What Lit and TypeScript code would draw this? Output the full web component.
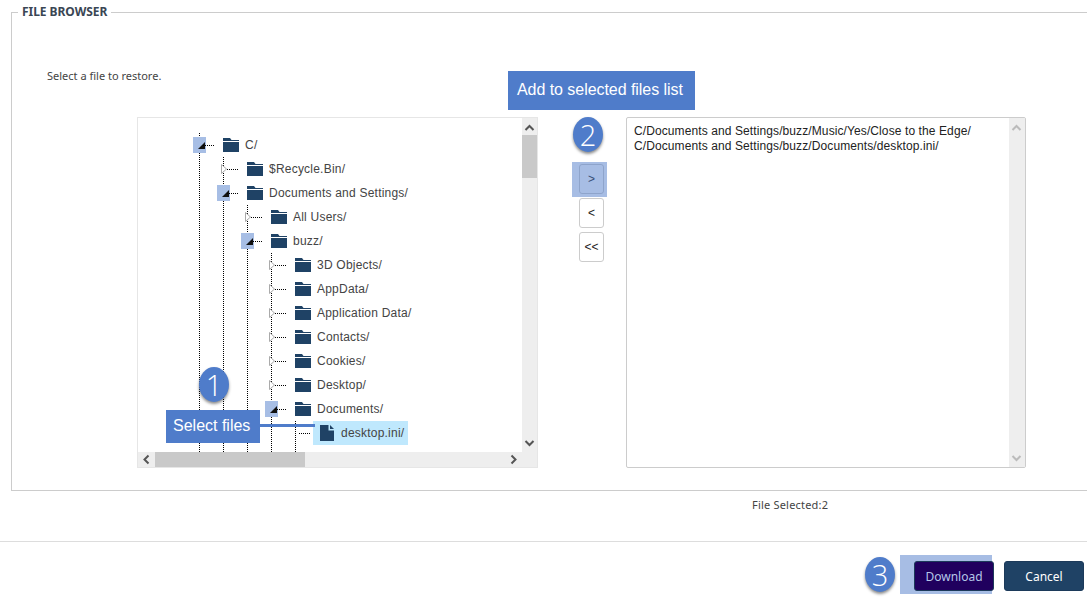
import { LitElement, html, css, svg } from "lit";
import { customElement } from "lit/decorators.js";

type Row = { name: string; depth: number; state: "open" | "closed" | "leaf"; selected?: boolean };

const rows: Row[] = [
  { name: "C/", depth: 0, state: "open" },
  { name: "$Recycle.Bin/", depth: 1, state: "closed" },
  { name: "Documents and Settings/", depth: 1, state: "open" },
  { name: "All Users/", depth: 2, state: "closed" },
  { name: "buzz/", depth: 2, state: "open" },
  { name: "3D Objects/", depth: 3, state: "closed" },
  { name: "AppData/", depth: 3, state: "closed" },
  { name: "Application Data/", depth: 3, state: "closed" },
  { name: "Contacts/", depth: 3, state: "closed" },
  { name: "Cookies/", depth: 3, state: "closed" },
  { name: "Desktop/", depth: 3, state: "closed" },
  { name: "Documents/", depth: 3, state: "open" },
  { name: "desktop.ini/", depth: 4, state: "leaf", selected: true },
];

const guides = [
  { depth: 0, top: 15 },
  { depth: 1, top: 39 },
  { depth: 2, top: 87 },
  { depth: 3, top: 135 },
  { depth: 4, top: 303 },
];

const chevron = (dir: "up" | "down" | "left" | "right", cls: string) => {
  const d = {
    up: "M1.5 7 L5.5 3 L9.5 7",
    down: "M1.5 4 L5.5 8 L9.5 4",
    left: "M7.5 1.5 L3.5 5.5 L7.5 9.5",
    right: "M3.5 1.5 L7.5 5.5 L3.5 9.5",
  }[dir];
  return html`<svg class="chev ${cls}" width="11" height="11" viewBox="0 0 11 11">${svg`<path d=${d} fill="none" stroke="currentColor" stroke-width="2"/>`}</svg>`;
};

const folder = html`<svg class="icon" width="16" height="14" viewBox="0 0 16 14"><path d="M0 0h7l1.5 2H16v1H0z" fill="#1f4265"/><path d="M0 4h16v10H0z" fill="#1f4265"/></svg>`;
const doc = html`<svg class="icon doc" width="14" height="16" viewBox="0 0 14 16"><path d="M0 0h8.5v5.5H14V16H0z" fill="#1f4265"/><path d="M10 0l4 4h-4z" fill="#1f4265"/></svg>`;

@customElement("app-root")
export class AppRoot extends LitElement {
  static styles = css`
    :host {
      display: block;
      position: relative;
      width: 1087px;
      height: 600px;
      overflow: hidden;
      background: #fff;
      font-family: "Liberation Sans", Arial, sans-serif;
      color: #444;
    }
    * { box-sizing: border-box; }
    .browser {
      margin: 0 0 0 11px;
      padding: 0;
      min-width: 0;
      height: 491px;
      border: 1px solid #ccc;
      border-right: none;
    }
    .browser legend {
      margin-left: 6px;
      padding: 0 4px;
      font: 700 12px/24px "Noto Sans", sans-serif;
      letter-spacing: -0.05px;
      color: #3a4654;
    }
    .intro {
      margin: 44px 0 0 35px;
      font: 11px/16px "Noto Sans", sans-serif;
      color: #444;
    }
    .columns {
      display: flex;
      align-items: flex-start;
      margin: 33px 0 0 125px;
    }
    .tree {
      display: grid;
      grid-template-columns: 384px 15px;
      grid-template-rows: 334px 15px;
      width: 401px;
      height: 351px;
      border: 1px solid #e6e6e6;
      flex: none;
    }
    .viewport {
      position: relative;
      overflow: hidden;
      padding-top: 15px;
    }
    .guide {
      position: absolute;
      bottom: 0;
      width: 1px;
      background: repeating-linear-gradient(to bottom, #000 0 1px, transparent 1px 2px);
    }
    .row {
      position: relative;
      display: flex;
      align-items: center;
      height: 24px;
      font-size: 12px;
      letter-spacing: 0.22px;
      white-space: nowrap;
    }
    .toggle {
      width: 13px;
      height: 16px;
      flex: none;
      display: block;
    }
    .toggle.open { background: #a7bee5; }
    .dots {
      width: 12px;
      height: 1px;
      margin: 1px 0 0 -3px;
      flex: none;
      background: repeating-linear-gradient(to right, #000 0 1px, transparent 1px 2px);
    }
    .label {
      display: flex;
      align-items: center;
      height: 24px;
      margin-left: 2px;
      padding: 0 4px 0 6px;
      gap: 6px;
    }
    .label.selected { background: #bfe8fd; }
    .icon { display: block; flex: none; }
    .doc { margin: 0 1px; }
    .vbar, .hbar, .corner { background: #eee; }
    .vbar { position: relative; }
    .hbar { position: relative; }
    .thumb { position: absolute; background: #c9c9c9; }
    .vbar .thumb { left: 0; right: 0; top: 17px; height: 43px; }
    .hbar .thumb { top: 0; bottom: 0; left: 17px; width: 150px; }
    .chev { position: absolute; display: block; color: #555; }
    .chev.muted { color: #bbb; }
    .chev.t { top: 5px; left: 2px; }
    .chev.b { bottom: 4px; left: 2px; }
    .chev.l { left: 3px; top: 2px; }
    .chev.r { right: 3px; top: 2px; }
    .movers {
      display: flex;
      flex-direction: column;
      gap: 4px;
      margin-left: 41px;
      padding-top: 47px;
      flex: none;
    }
    .movers button {
      width: 25px;
      height: 30px;
      padding: 0;
      border: 1px solid #ccc;
      border-radius: 3px;
      background: #fff;
      color: #222;
      font: 12px "Liberation Sans", sans-serif;
    }
    .list {
      display: flex;
      justify-content: space-between;
      width: 400px;
      height: 351px;
      margin-left: 22px;
      border: 1px solid #ccc;
      border-radius: 2px;
      flex: none;
      font-size: 12px;
      line-height: 15px;
      letter-spacing: 0.1px;
      color: #222;
    }
    .list .paths { padding: 6px 0 0 7px; white-space: nowrap; }
    .list .vbar { width: 16px; height: 100%; }
    .count {
      margin: 6px 0 0 752px;
      font: 11px/16px "Noto Sans", sans-serif;
      letter-spacing: 0.2px;
      color: #444;
    }
    .rule {
      height: 1px;
      margin-top: 28px;
      background: #ddd;
    }
    .footer {
      display: flex;
      justify-content: flex-end;
      gap: 10px;
      padding: 19px 3px 0 0;
    }
    .footer button {
      position: relative;
      z-index: 1;
      width: 80px;
      height: 30px;
      padding: 0;
      border: 1px solid #1c3a5a;
      border-radius: 3px;
      font: 12px "Noto Sans", sans-serif;
    }
    .download { background: #20005e; color: #b5c6e8; }
    .cancel { background: #1f4265; color: #fff; }

    .callout {
      position: absolute;
      display: flex;
      align-items: center;
      padding-bottom: 2px;
      background: #4f7cca;
      color: #fff;
      font-size: 16px;
    }
    .callout.add { left: 508px; top: 71px; width: 187px; height: 39px; padding-left: 9px; letter-spacing: -0.05px; }
    .callout.sel { left: 166px; top: 410px; width: 94px; height: 33px; padding-left: 7px; }
    .connector {
      position: absolute;
      left: 260px;
      top: 424px;
      width: 55px;
      height: 3px;
      background: #4f7cca;
    }
    .badge {
      position: absolute;
      display: flex;
      align-items: center;
      justify-content: center;
      width: 30px;
      height: 35px;
      border-radius: 50%;
      background: #4f7cca;
      color: #fff;
      font: 300 29px "Open Sans", sans-serif;
      box-shadow: 0 2px 3px rgba(0, 0, 0, 0.45);
    }
    .b1 { left: 199px; top: 367px; }
    .b2 { left: 573px; top: 117px; }
    .b3 { left: 865px; top: 557px; }
    .glow { position: absolute; background: rgba(79, 124, 202, 0.5); }
    .glow.mover { left: 572px; top: 162px; width: 35px; height: 35px; }
    .glow.dl { left: 900px; top: 555px; width: 92px; height: 39px; }
  `;

  private renderToggle(r: Row) {
    if (r.state === "open") {
      return html`<svg class="toggle open" viewBox="0 0 13 16"><path d="M12 5v7H5z" fill="#111"/></svg>`;
    }
    if (r.state === "closed") {
      return html`<svg class="toggle" viewBox="0 0 13 16"><path d="M4.5 3.5l5 4.5-5 4.5z" fill="#fff" stroke="#aaa"/></svg>`;
    }
    return html`<span class="toggle"></span>`;
  }

  render() {
    return html`
      <fieldset class="browser">
        <legend>FILE BROWSER</legend>
        <div class="intro">Select a file to restore.</div>
        <div class="columns">
          <div class="tree">
            <div class="viewport">
              ${guides.map(
                (g) => html`<span class="guide" style="left:${61 + 24 * g.depth}px;top:${g.top}px"></span>`
              )}
              ${rows.map(
                (r) => html`
                  <div class="row" style="padding-left:${55 + 24 * r.depth}px">
                    ${this.renderToggle(r)}
                    <span class="dots"></span>
                    <span class="label ${r.selected ? "selected" : ""}">
                      ${r.state === "leaf" ? doc : folder}<span>${r.name}</span>
                    </span>
                  </div>
                `
              )}
            </div>
            <div class="vbar">
              ${chevron("up", "t")}
              <div class="thumb"></div>
              ${chevron("down", "b")}
            </div>
            <div class="hbar">
              ${chevron("left", "l")}
              <div class="thumb"></div>
              ${chevron("right", "r")}
            </div>
            <div class="corner"></div>
          </div>
          <div class="movers">
            <button>&gt;</button>
            <button>&lt;</button>
            <button>&lt;&lt;</button>
          </div>
          <div class="list">
            <div class="paths">
              C/Documents and Settings/buzz/Music/Yes/Close to the Edge/<br />
              C/Documents and Settings/buzz/Documents/desktop.ini/
            </div>
            <div class="vbar">
              ${chevron("up", "t muted")}
              ${chevron("down", "b muted")}
            </div>
          </div>
        </div>
      </fieldset>
      <div class="count">File Selected:2</div>
      <div class="rule"></div>
      <div class="footer">
        <button class="download">Download</button>
        <button class="cancel">Cancel</button>
      </div>

      <div class="glow mover"></div>
      <div class="glow dl"></div>
      <div class="callout add">Add to selected files list</div>
      <div class="connector"></div>
      <div class="callout sel">Select files</div>
      <div class="badge b1">1</div>
      <div class="badge b2">2</div>
      <div class="badge b3">3</div>
    `;
  }
}
